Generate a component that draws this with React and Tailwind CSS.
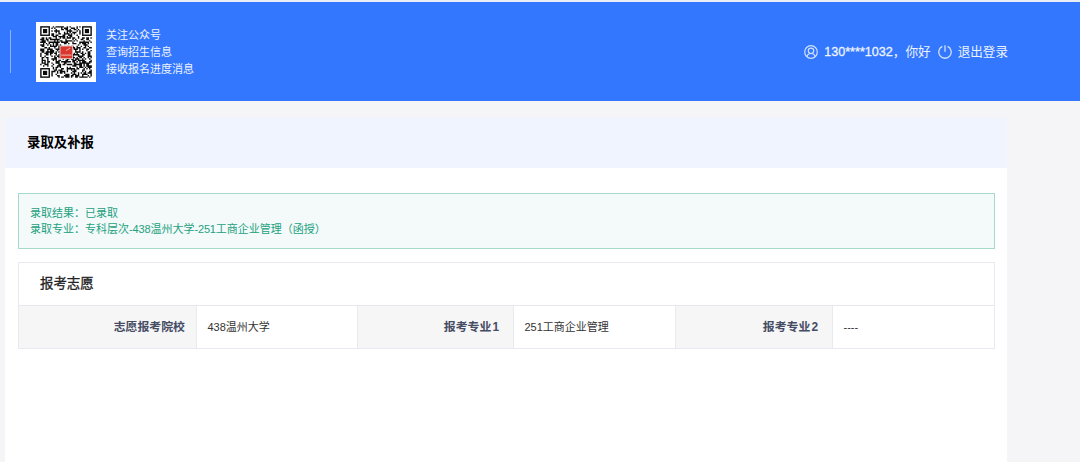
import React from 'react';

const QR_SIZE = 37;

const choices = [
    { label: '志愿报考院校', value: '438温州大学' },
    { label: '报考专业', number: '1', value: '251工商企业管理' },
    { label: '报考专业', number: '2', value: '----' },
];

function inFinder(x, y) {
    const last = QR_SIZE - 8;
    return (x < 8 && y < 8) || (x >= last && y < 8) || (x < 8 && y >= last);
}

function buildModules() {
    const modules = [];
    let seed = 20231;
    for (let y = 0; y < QR_SIZE; y++) {
        for (let x = 0; x < QR_SIZE; x++) {
            seed = (seed * 48271) % 2147483647;
            if (!inFinder(x, y) && seed / 2147483647 < 0.52) {
                modules.push(`M${x} ${y}h1v1h-1z`);
            }
        }
    }
    return modules.join('');
}

const qrPath = buildModules();

function Finder({ x, y }) {
    return (
        <g>
            <rect x={x + 0.5} y={y + 0.5} width="6" height="6" fill="none" stroke="#0c0c0c" />
            <rect x={x + 2} y={y + 2} width="3" height="3" fill="#0c0c0c" />
        </g>
    );
}

function QrCode() {
    return (
        <svg viewBox="-3 -3 43 43" className="w-[60px] h-[60px] bg-white shrink-0">
            <path d={qrPath} fill="#0c0c0c" />
            <Finder x={0} y={0} />
            <Finder x={30} y={0} />
            <Finder x={0} y={30} />
            <rect x="14" y="14" width="9.5" height="9.5" fill="#f3dedb" />
            <rect x="14.5" y="14.5" width="8.5" height="8.5" fill="#d8362e" />
            <path d="M15 20.7h7.5M18.5 17.5l3-1.8" stroke="#eba098" strokeWidth="0.8" />
        </svg>
    );
}

function UserIcon() {
    return (
        <svg viewBox="0 0 14 14" className="w-[14px] h-[14px]" fill="none" stroke="#cfe0ff" strokeWidth="1.2">
            <circle cx="7" cy="7" r="6.3" />
            <circle cx="7" cy="5.8" r="2.7" />
            <path d="M3.1 11.7c.2-2 1.7-3.2 3.9-3.2s3.7 1.2 3.9 3.2" />
        </svg>
    );
}

function PowerIcon() {
    return (
        <svg viewBox="0 0 14 14" className="w-[14px] h-[14px]" fill="none" stroke="#cfe0ff" strokeWidth="1.3">
            <path d="M4.4 1.4a6.2 6.2 0 1 0 5.2 0" />
            <path d="M7 .3v6.5" />
        </svg>
    );
}

export default function App() {
    return (
        <div className="h-[462px] overflow-hidden bg-[#f5f5f7] font-['Liberation_Sans','Noto_Sans_CJK_SC',sans-serif] flex flex-col">
            {/* Header */}
            <header className="h-[101px] shrink-0 border-t-2 border-[#e9edf5] bg-[#3377ff] text-white flex items-start justify-between pl-[10px] pr-[72px]">
                <div className="flex items-start">
                    <div className="w-px h-[43px] mt-7 bg-[#8db3ff]"></div>
                    <div className="ml-[25px] mt-5 flex">
                        <QrCode />
                        <div className="ml-[10px] mt-[5px] text-[11px] leading-[17.2px] text-[#edf3ff]">
                            <p>关注公众号</p>
                            <p>查询招生信息</p>
                            <p>接收报名进度消息</p>
                        </div>
                    </div>
                </div>
                <div className="mt-10 h-5 flex items-center text-[12.6px] leading-5 text-[#edf3ff]">
                    <UserIcon />
                    <span className="ml-[6px]">
                        <span className="[-webkit-text-stroke:0.3px]">130****1032</span>，你好
                    </span>
                    <span className="ml-[7px] mr-[6px]"><PowerIcon /></span>
                    <span>退出登录</span>
                </div>
            </header>

            {/* Content card */}
            <main className="mt-[17px] ml-[5px] w-[1002px] flex-1 bg-white">
                <h1 className="h-[50px] pl-[22px] bg-[#f0f4ff] text-[13.4px] leading-[50px] font-bold text-black">录取及补报</h1>

                <div className="mt-[25px] ml-[13px] w-[977px] h-[56px] pl-[11px] pt-[11px] border border-[#a5dacb] bg-[#f3faf9] text-[11px] leading-4 text-[#23a17f]">
                    <p>录取结果：已录取</p>
                    <p>录取专业：专科层次<span className="tracking-[-0.15px]">-438</span>温州大学<span className="tracking-[-0.15px]">-251</span>工商企业管理（函授）</p>
                </div>

                <section className="mt-[13px] ml-[13px] w-[977px] h-[87px] border border-[#e8eaef]">
                    <h2 className="h-[42px] pl-[21px] text-[13.4px] leading-[42px] text-[#222] [-webkit-text-stroke:0.3px]">报考志愿</h2>
                    <dl className="h-[43px] border-t border-[#e6e8ed] grid grid-cols-[177px_162px_155px_163px_156px_1fr] text-[11px] leading-[42px]">
                        {choices.map((item) => (
                            <React.Fragment key={item.value}>
                                <dt className="pr-[11px] bg-[#f6f6f7] text-right text-[11.9px] font-bold text-[#454c63]">
                                    {item.label}
                                    {item.number && <span className="ml-px mr-[3px]">{item.number}</span>}
                                </dt>
                                <dd className="pl-[10.5px] border-x border-[#e8eaef] last:border-r-0 text-[#333]">{item.value}</dd>
                            </React.Fragment>
                        ))}
                    </dl>
                </section>
            </main>
        </div>
    );
}
